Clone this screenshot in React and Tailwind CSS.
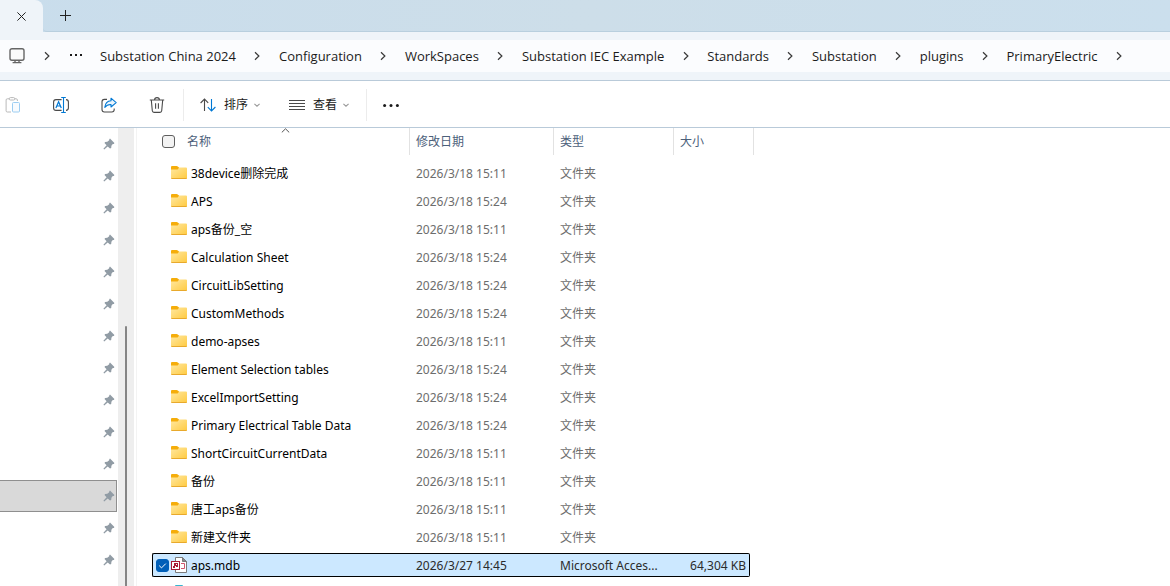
const crumbs = [
    'Substation China 2024',
    'Configuration',
    'WorkSpaces',
    'Substation IEC Example',
    'Standards',
    'Substation',
    'plugins',
    'PrimaryElectric',
];

const folders = [
    { name: '38device删除完成', date: '2026/3/18 15:11' },
    { name: 'APS', date: '2026/3/18 15:24' },
    { name: 'aps备份_空', date: '2026/3/18 15:11' },
    { name: 'Calculation Sheet', date: '2026/3/18 15:24' },
    { name: 'CircuitLibSetting', date: '2026/3/18 15:24' },
    { name: 'CustomMethods', date: '2026/3/18 15:24' },
    { name: 'demo-apses', date: '2026/3/18 15:11' },
    { name: 'Element Selection tables', date: '2026/3/18 15:24' },
    { name: 'ExcelImportSetting', date: '2026/3/18 15:24' },
    { name: 'Primary Electrical Table Data', date: '2026/3/18 15:24' },
    { name: 'ShortCircuitCurrentData', date: '2026/3/18 15:11' },
    { name: '备份', date: '2026/3/18 15:11' },
    { name: '唐工aps备份', date: '2026/3/18 15:11' },
    { name: '新建文件夹', date: '2026/3/18 15:11' },
];

const PIN_COUNT = 15;
const ACTIVE_PIN = 11;

function Chevron() {
    return (
        <svg className="h-4 w-4 shrink-0" viewBox="0 0 16 16" fill="none" stroke="#3a3a3a" strokeWidth="1.2" aria-hidden="true">
            <path d="M6 4.2 L9.9 8 L6 11.8" />
        </svg>
    );
}

function ChevronDown() {
    return (
        <svg className="h-2 w-2" viewBox="0 0 8 8" fill="none" stroke="#9a9a9a" strokeWidth="1.1" aria-hidden="true">
            <path d="M1.4 2.8 L4 5.2 L6.6 2.8" />
        </svg>
    );
}

function PinIcon() {
    return (
        <svg className="h-3 w-3" viewBox="0 0 12 12" fill="#919ca5" aria-hidden="true">
            <path d="M7 0.6 L11.4 5 L10.9 5.9 L9.8 6 L8.4 7.8 L8.2 9.9 L7 10.6 L4.7 8.5 L1.2 11.6 L0.4 10.8 L3.6 7.3 L1.5 5.1 L2.1 4 L4.3 3.8 L6.2 2.3 L6.3 1.2 Z" />
        </svg>
    );
}

function FolderIcon() {
    return (
        <svg className="h-4 w-4 shrink-0" viewBox="0 0 16 16" aria-hidden="true">
            <defs>
                <linearGradient id="folderFront" x1="0" y1="0" x2="1" y2="1">
                    <stop offset="0" stopColor="#ffe8a0" />
                    <stop offset="1" stopColor="#ffca40" />
                </linearGradient>
            </defs>
            <path d="M0 2 Q0 1 1 1 H5.6 Q6.3 1 6.8 1.5 L8 2.6 V6 H0 Z" fill="#f5ad0a" />
            <path d="M0 4.6 H5.8 Q6.6 4.6 7.1 4 L8 2.6 H15 Q16 2.6 16 3.6 V12.8 Q16 14 15 14 H1 Q0 14 0 13 Z" fill="url(#folderFront)" />
            <path d="M0 12.6 Q0 14 1 14 H15 Q16 14 16 12.6 Q15.8 13.1 15 13.1 H1 Q0.2 13.1 0 12.6 Z" fill="#e8a92c" />
        </svg>
    );
}

function AccessIcon() {
    return (
        <svg className="h-4 w-4 shrink-0" viewBox="0 0 16 16" fill="none" aria-hidden="true">
            <path d="M4.5 0.5 H11.5 L15.5 4.5 V15.5 H4.5 Z" fill="#fff" stroke="#7b7b7b" />
            <path d="M11.5 0.5 V4.5 H15.5 Z" fill="#8a8a8a" stroke="#7b7b7b" />
            <path d="M10 6.5 H13.5 V11.5 H10" stroke="#d0566e" />
            <rect x="0.5" y="4.5" width="8" height="8" fill="#fff" stroke="#a91b37" />
            <path d="M3 6 H7 V10 H5 V9 H4 V11 H2 V9 H3 Z" fill="#a91b37" />
            <rect x="5" y="7" width="1" height="1" fill="#fff" />
        </svg>
    );
}

function PasteIcon() {
    return (
        <svg className="h-4 w-4" viewBox="0 0 16 16" fill="none" aria-hidden="true">
            <path d="M4.5 1.8 H2.3 Q1.1 1.8 1.1 3 V13.8 Q1.1 15 2.3 15 H6 M9.5 1.8 H11.2 Q12.4 1.8 12.4 3 V4" stroke="#b9b9b9" />
            <rect x="4.2" y="0.6" width="5.6" height="2.4" rx="1.2" stroke="#b9b9b9" />
            <rect x="7.5" y="5.5" width="7" height="9.5" rx="1" fill="#f8fbfe" stroke="#9ccdf2" />
        </svg>
    );
}

function RenameIcon() {
    return (
        <svg className="h-4 w-4" viewBox="0 0 16 16" fill="none" aria-hidden="true">
            <path d="M8.6 2.6 H3 Q0.6 2.6 0.6 5 V11 Q0.6 13.4 3 13.4 H8.6 M13 2.6 Q15.4 2.8 15.4 5 V11 Q15.4 13.2 13 13.4" stroke="#4a4a4a" strokeWidth="1.1" />
            <path d="M10.5 0.6 V15.4 M8.2 0.5 H12.8 M8.2 15.5 H12.8" stroke="#0078d4" strokeWidth="1.1" />
            <path d="M2.9 11 L5.6 4.8 L8.3 11 M3.8 9 H7.4" stroke="#0078d4" strokeWidth="1.2" />
        </svg>
    );
}

function ShareIcon() {
    return (
        <svg className="h-4 w-4" viewBox="0 0 16 16" fill="none" aria-hidden="true">
            <path d="M6 2.4 H3.4 Q1 2.4 1 4.8 V12.6 Q1 15 3.4 15 H10.8 Q13.2 15 13.2 12.6 V11.6" stroke="#4a4a4a" strokeWidth="1.1" />
            <path d="M10 1.2 L15.2 5.6 L10 10 V7.5 Q6.2 7.3 3.8 10.4 Q4.4 4.2 10 3.8 Z" fill="#eaf5fd" stroke="#0078d4" strokeWidth="1.1" strokeLinejoin="round" />
        </svg>
    );
}

function TrashIcon() {
    return (
        <svg className="h-4 w-4" viewBox="0 0 16 16" fill="none" stroke="#4a4a4a" strokeWidth="1.1" aria-hidden="true">
            <path d="M0.8 3 H15.2 M5.6 2.8 Q5.6 0.6 8 0.6 Q10.4 0.6 10.4 2.8 M2.3 3 L3.3 13.8 Q3.5 15.4 5 15.4 H11 Q12.5 15.4 12.7 13.8 L13.7 3 M6.6 6.2 V11.8 M9.4 6.2 V11.8" />
        </svg>
    );
}

function SortIcon() {
    return (
        <svg className="h-4 w-4" viewBox="0 0 16 16" fill="none" strokeWidth="1.1" aria-hidden="true">
            <path d="M4.5 14 V2 M0.6 6 L4.5 2 L8.2 5.8" stroke="#4a4a4a" />
            <path d="M11.5 2 V14 M7.8 10.2 L11.5 14 L15.4 10" stroke="#0078d4" />
        </svg>
    );
}

function TitleBar() {
    return (
        <div className="flex h-8 shrink-0 bg-linear-to-r from-[#c9ddec] via-[#cddee9] to-[#cbdfed]">
            <div className="flex w-[43px] items-center justify-center rounded-tr-lg bg-[#eff4f9]">
                <button type="button" aria-label="关闭标签页" className="flex h-6 w-6 items-center justify-center">
                    <svg className="h-[9px] w-[9px]" viewBox="0 0 9 9" stroke="#222" strokeWidth="1" aria-hidden="true">
                        <path d="M0.4 0.4 L8.6 8.6 M8.6 0.4 L0.4 8.6" />
                    </svg>
                </button>
            </div>
            <div className="flex flex-1 items-center rounded-bl-sm border-b border-[#b9cfde] pl-2.5">
                <button type="button" aria-label="新建标签页" className="flex h-6 w-6 items-center justify-center">
                    <svg className="h-[11px] w-[11px]" viewBox="0 0 11 11" stroke="#222" strokeWidth="1" aria-hidden="true">
                        <path d="M5.5 0 V11 M0 5.5 H11" />
                    </svg>
                </button>
            </div>
        </div>
    );
}

function AddressBar() {
    return (
        <nav className="shrink-0 border-b border-[#b9cad9] bg-[#eff4f9] py-2">
            <ol className="flex h-8 items-center bg-[#fbfcfe] pl-2 font-['Open_Sans','Noto_Sans_CJK_SC',sans-serif] text-[13px] text-[#1b1b1b]">
                <li className="flex items-center">
                    <svg className="h-[18px] w-[18px]" viewBox="0 0 18 18" fill="none" aria-hidden="true">
                        <rect x="2" y="1.7" width="14" height="11.6" rx="2" fill="#fafafa" stroke="#666" strokeWidth="1.4" />
                        <path d="M7 13 V15 M11 13 V15 M4.6 15.6 H13.4" stroke="#666" strokeWidth="1.4" />
                    </svg>
                </li>
                <li className="ml-[13px] flex items-center">
                    <Chevron />
                </li>
                <li className="ml-3.5 flex items-center">
                    <button type="button" aria-label="更多位置" className="flex h-6 w-4 items-center">
                        <svg className="h-1 w-3.5" viewBox="0 0 14 4" fill="#1b1b1b" aria-hidden="true">
                            <rect x="1" y="0" width="2" height="2" />
                            <rect x="6" y="0" width="2" height="2" />
                            <rect x="11" y="0" width="2" height="2" />
                        </svg>
                    </button>
                </li>
                <li className="w-[15px]" />
                {crumbs.map((crumb) => (
                    <li key={crumb} className="flex items-center whitespace-nowrap">
                        <a href="#" className="leading-5">
                            {crumb}
                        </a>
                        <span className="flex w-[43px] justify-center">
                            <Chevron />
                        </span>
                    </li>
                ))}
            </ol>
        </nav>
    );
}

function Toolbar() {
    const iconButton = 'flex h-8 w-8 items-center justify-center';

    return (
        <div className="flex h-[47px] shrink-0 items-center border-b border-[#b9cad9] bg-white pt-0.5 text-xs text-[#1b1b1b]">
            <div className="flex items-center gap-4 pr-2.5">
                <button type="button" aria-label="粘贴" className="flex h-8 w-[29px] items-center pl-[5px]">
                    <PasteIcon />
                </button>
                <button type="button" aria-label="重命名" className={iconButton}>
                    <RenameIcon />
                </button>
                <button type="button" aria-label="共享" className={iconButton}>
                    <ShareIcon />
                </button>
                <button type="button" aria-label="删除" className={iconButton}>
                    <TrashIcon />
                </button>
            </div>
            <div className="flex h-8 items-center border-x border-[#ececec] px-4">
                <button type="button" className="flex items-center">
                    <SortIcon />
                    <span className="ml-2">排序</span>
                    <span className="ml-[5px]">
                        <ChevronDown />
                    </span>
                </button>
                <button type="button" className="ml-7 flex items-center">
                    <svg className="h-4 w-4" viewBox="0 0 16 16" stroke="#4a4a4a" strokeWidth="1" aria-hidden="true">
                        <path d="M0 3.5 H16 M0 6.5 H16 M0 9.5 H16 M0 12.5 H16" />
                    </svg>
                    <span className="ml-2">查看</span>
                    <span className="ml-[5px]">
                        <ChevronDown />
                    </span>
                </button>
            </div>
            <button type="button" aria-label="查看更多" className="ml-2 flex h-8 w-8 items-center justify-center">
                <svg className="h-4 w-4" viewBox="0 0 16 16" fill="#1b1b1b" aria-hidden="true">
                    <circle cx="1.6" cy="8.6" r="1.5" />
                    <circle cx="8" cy="8.6" r="1.5" />
                    <circle cx="14.4" cy="8.6" r="1.5" />
                </svg>
            </button>
        </div>
    );
}

function Sidebar() {
    return (
        <aside className="flex shrink-0 overflow-hidden">
            <ul className="w-[117px]">
                {Array.from({ length: PIN_COUNT }, (_, i) => (
                    <li
                        key={i}
                        className={
                            i === ACTIVE_PIN
                                ? 'flex h-8 items-center justify-end border border-l-0 border-[#8f8f8f] bg-[#d9d9d9] pr-px'
                                : 'flex h-8 items-center justify-end pr-0.5'
                        }
                    >
                        <PinIcon />
                    </li>
                ))}
            </ul>
            <div className="ml-px flex w-4 justify-center bg-[#eeeeee] pt-[198px]">
                <div className="w-0.5 rounded-t-sm bg-[#858585]" />
            </div>
            <div className="ml-0.5 w-px bg-[#f3f3f3]" />
        </aside>
    );
}

function FileTable() {
    const headCell = 'flex h-[27px] items-center border-r border-[#e2e2e2]';

    return (
        <table className="w-[602px] table-fixed border-collapse text-left text-xs">
            <colgroup>
                <col className="w-[258px]" />
                <col className="w-36" />
                <col className="w-[120px]" />
                <col className="w-[76px]" />
                <col className="w-1" />
            </colgroup>
            <thead className="text-[#4c607a]">
                <tr>
                    <th className="h-[31px] p-0 align-top font-normal">
                        <div className={`${headCell} relative pl-2.5`}>
                            <input
                                type="checkbox"
                                aria-label="全选"
                                className="h-[13px] w-[13px] appearance-none rounded-[3px] border border-[#5f5f5f] bg-[#f3f3f3]"
                            />
                            <span className="ml-3">名称</span>
                            <svg className="absolute top-0 left-[129px] h-[5px] w-[9px]" viewBox="0 0 9 5" fill="none" stroke="#555" aria-hidden="true">
                                <path d="M0.8 4.4 L4.5 0.8 L8.2 4.4" />
                            </svg>
                        </div>
                    </th>
                    <th className="p-0 align-top font-normal">
                        <div className={`${headCell} pl-1.5`}>修改日期</div>
                    </th>
                    <th className="p-0 align-top font-normal">
                        <div className={`${headCell} pl-1.5`}>类型</div>
                    </th>
                    <th colSpan={2} className="p-0 align-top font-normal">
                        <div className={`${headCell} pl-1.5`}>大小</div>
                    </th>
                </tr>
            </thead>
            <tbody className="text-[#6d6d6d]">
                {folders.map((folder) => (
                    <tr key={folder.name}>
                        <td className="h-7 p-0">
                            <div className="flex items-center pl-[19px] text-black">
                                <FolderIcon />
                                <span className="ml-1 pt-0.5 whitespace-nowrap">{folder.name}</span>
                            </div>
                        </td>
                        <td className="p-0 pt-0.5 pl-1.5">{folder.date}</td>
                        <td className="p-0 pt-0.5 pl-1.5">文件夹</td>
                        <td className="p-0" />
                    </tr>
                ))}
                <tr className="text-[#2b2b2b]">
                    <td className="h-7 p-0">
                        <div className="flex h-6 items-center rounded-l-xs border border-r-0 border-black bg-[#cce8ff] pl-[3px] text-black">
                            <span className="relative flex h-[13px] w-[13px]">
                                <input
                                    id="pick-aps"
                                    type="checkbox"
                                    defaultChecked
                                    className="peer h-[13px] w-[13px] appearance-none rounded-[3px] border border-[#005fb8] bg-white checked:bg-[#005fb8]"
                                />
                                <svg className="pointer-events-none absolute inset-0 hidden h-[13px] w-[13px] peer-checked:block" viewBox="0 0 13 13" fill="none" stroke="#fff" aria-hidden="true">
                                    <path d="M3.2 6.6 L5.5 8.9 L9.8 4.6" />
                                </svg>
                            </span>
                            <span className="ml-0.5">
                                <AccessIcon />
                            </span>
                            <label htmlFor="pick-aps" className="ml-1 pt-0.5">
                                aps.mdb
                            </label>
                        </div>
                    </td>
                    <td className="p-0">
                        <div className="flex h-6 items-center border-y border-black bg-[#cce8ff] pt-0.5 pl-1.5">2026/3/27 14:45</div>
                    </td>
                    <td className="p-0">
                        <div className="flex h-6 items-center border-y border-black bg-[#cce8ff] pt-0.5 pl-1.5">Microsoft Acces...</div>
                    </td>
                    <td className="p-0">
                        <div className="flex h-6 items-center justify-end rounded-r-xs border border-l-0 border-black bg-[#cce8ff] pt-0.5 pr-[3px] whitespace-nowrap">64,304 KB</div>
                    </td>
                </tr>
                <tr>
                    <td className="h-7 p-0 pl-[19px]">
                        <svg className="h-4 w-4" viewBox="0 0 16 16" aria-hidden="true">
                            <path d="M1 3 H15 V15 H1 Z" fill="#c9cdd0" />
                            <rect x="4" y="0" width="8" height="8" rx="1" fill="#35b6cf" />
                        </svg>
                    </td>
                </tr>
            </tbody>
        </table>
    );
}

export default function App() {
    return (
        <div className="flex h-screen flex-col overflow-hidden bg-white font-['Noto_Sans','Noto_Sans_CJK_SC',sans-serif]">
            <TitleBar />
            <AddressBar />
            <Toolbar />
            <div className="flex min-h-0 flex-1">
                <Sidebar />
                <main className="min-w-0 flex-1 overflow-hidden pl-[15px]">
                    <FileTable />
                </main>
            </div>
        </div>
    );
}
